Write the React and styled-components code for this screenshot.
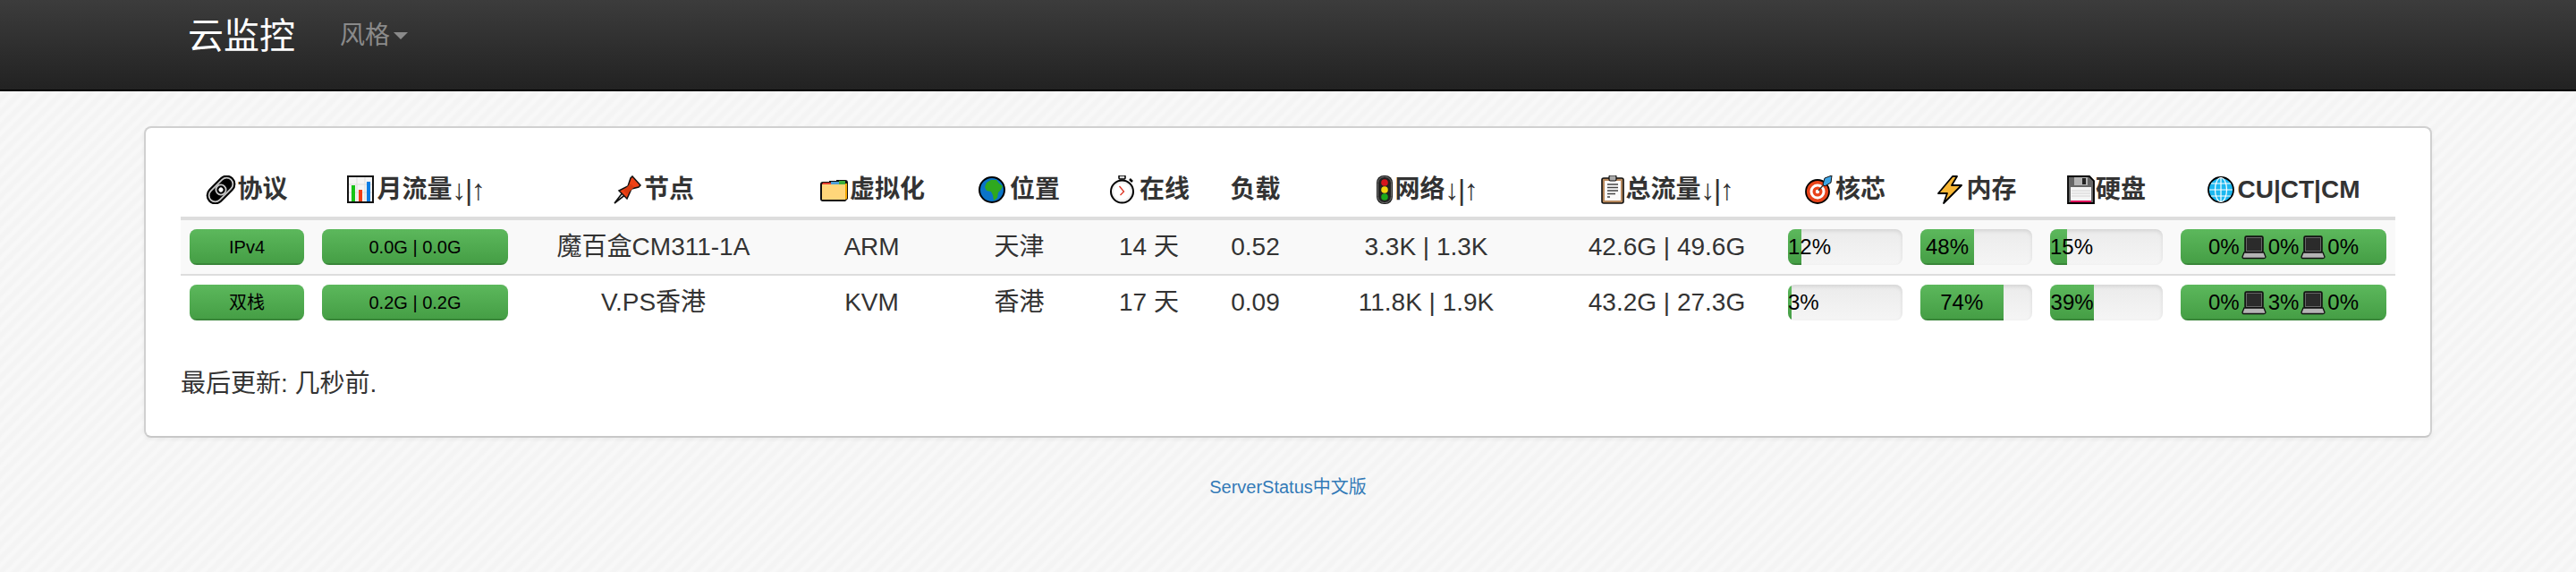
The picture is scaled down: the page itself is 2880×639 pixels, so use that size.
import React from "react";
import styled, { createGlobalStyle } from "styled-components";

const GlobalStyle = createGlobalStyle`
  html, body {
    margin: 0;
    padding: 0;
  }
  body {
    min-height: 639px;
    color: #333;
    font-family: "Liberation Sans", "Noto Sans CJK SC", sans-serif;
    font-size: 28px;
    line-height: 40px;
    background-color: #f6f6f6;
    background-image: repeating-linear-gradient(
      135deg,
      #f4f4f4 0,
      #f4f4f4 3px,
      #f8f8f8 6px,
      #f8f8f8 8px,
      #f4f4f4 11px
    );
  }
  * {
    box-sizing: border-box;
  }
`;

const NavBar = styled.nav`
  display: flex;
  height: 102px;
  padding: 20px 0 0 210px;
  background: linear-gradient(to bottom, #3c3c3c 0, #222 100%);
  border-bottom: 2px solid #000;
`;

const Brand = styled.a`
  width: 170px;
  color: #fff;
  font-size: 40px;
  line-height: 40px;
`;

const NavLink = styled.a`
  display: flex;
  align-items: center;
  height: 40px;
  color: #8a8a8a;
  font-size: 28px;
`;

const Caret = styled.span`
  width: 0;
  height: 0;
  margin-left: 4px;
  border-top: 8px solid #8a8a8a;
  border-left: 8px solid transparent;
  border-right: 8px solid transparent;
`;

const Card = styled.section`
  width: 2558px;
  margin: 39px auto 0;
  padding: 38px 39px;
  background: #fff;
  border: 2px solid #d0d0d0;
  border-bottom-color: #c8c8c8;
  border-radius: 8px;
  box-shadow: 0 2px 4px rgba(0, 0, 0, 0.05);
`;

const Table = styled.table`
  width: 2476px;
  margin-bottom: 41px;
  table-layout: fixed;
  border-collapse: separate;
  border-spacing: 0;
`;

const Th = styled.th`
  height: 65px;
  padding: 0;
  border-bottom: 4px solid #ddd;
  text-align: center;
  vertical-align: middle;
  white-space: nowrap;
  font-weight: 700;
  font-size: 28px;
`;

const HeadInner = styled.span`
  display: flex;
  align-items: center;
  justify-content: center;
`;

const Arrows = styled.span`
  font-weight: 400;
  font-size: 32px;
  letter-spacing: -1.5px;
`;

const Row = styled.tr`
  background: ${(p) => (p.$striped ? "#f9f9f9" : "transparent")};
`;

const Td = styled.td`
  height: ${(p) => (p.$divided ? 62 : 60)}px;
  padding: 0 10px;
  border-top: ${(p) => (p.$divided ? "2px solid #ddd" : "0")};
  text-align: center;
  vertical-align: middle;
  white-space: nowrap;
`;

const Progress = styled.div`
  height: 40px;
  border-radius: 8px;
  overflow: hidden;
  background: linear-gradient(to bottom, #ebebeb 0, #f5f5f5 100%);
  box-shadow: inset 0 2px 4px rgba(0, 0, 0, 0.1);
  color: #000;
  font-size: ${(p) => p.$size || 24}px;
  line-height: 40px;
`;

const Bar = styled.div`
  height: 100%;
  white-space: nowrap;
  text-align: center;
  background: linear-gradient(to bottom, #5cb85c 0, #449d44 100%);
  box-shadow: inset 0 -2px 0 rgba(0, 0, 0, 0.15);
`;

const PingInner = styled.div`
  display: flex;
  align-items: center;
  justify-content: center;
  height: 100%;
`;

const Note = styled.p`
  margin: 0;
  line-height: 40px;
`;

const Footer = styled.footer`
  margin-top: 35px;
  text-align: center;
  font-size: 20px;
  line-height: 40px;
  color: #337ab7;
`;

const Svg = styled.svg`
  display: block;
  flex: none;
  width: ${(p) => p.$w || 35}px;
  height: ${(p) => p.$h || 32}px;
`;

const LinkIcon = () => (
  <Svg viewBox="0 0 35 32">
    <g transform="rotate(-45 17 16)">
      <rect x="-2" y="6" width="38" height="20" rx="10" fill="#000" />
      <rect x="1" y="9" width="32" height="14" rx="7" fill="none" stroke="#c8c8c8" strokeWidth="1.8" />
      <circle cx="17" cy="16" r="5.6" fill="#000" stroke="#c8c8c8" strokeWidth="1.8" />
      <circle cx="17" cy="16" r="2.6" fill="#fff" />
    </g>
  </Svg>
);

const ChartIcon = () => (
  <Svg viewBox="0 0 35 32">
    <rect x="2" y="1" width="28" height="29" fill="#f4f4f4" stroke="#111" strokeWidth="2" />
    <path d="M3 10H29M3 19H29M12 2V29M21 2V29" stroke="#ddd" strokeWidth="1" />
    <rect x="6" y="11" width="4" height="18" fill="#16c316" />
    <rect x="14" y="16" width="4" height="13" fill="#f23c14" />
    <rect x="23" y="7" width="4" height="22" fill="#0a7de4" />
  </Svg>
);

const PinIcon = () => (
  <Svg viewBox="0 0 35 32">
    <path d="M2 31L12 18L15 21Z" fill="#eee" stroke="#111" strokeWidth="1.6" />
    <path d="M7 17L17 12L20 3L22 1L31 11L29 13L21 15L16 26Z" fill="#ee4115" stroke="#111" strokeWidth="1.5" />
    <path d="M12 17L20 9L24 13L16 21Z" fill="#d83a10" />
  </Svg>
);

const FolderIcon = () => (
  <Svg viewBox="0 0 35 32">
    <path d="M2 10Q2 7 5 7H12V6H20V5H30Q33 5 33 8V26L30 29H5Q2 29 2 26Z" fill="#111" />
    <path d="M5 8H14V10H4Z" fill="#e23b2c" />
    <path d="M14 7H23V10H14Z" fill="#4e9fd8" />
    <path d="M23 6H30V10H23Z" fill="#3fae3a" />
    <path d="M30 9H32V26L30 27Z" fill="#f5a800" />
    <rect x="4" y="10" width="26" height="17" fill="#ffd67a" />
  </Svg>
);

const EarthIcon = () => (
  <Svg viewBox="0 0 35 32">
    <circle cx="15" cy="16" r="14" fill="#0b74c8" stroke="#000" strokeWidth="2" />
    <path d="M9 8L14 5L20 5L23 9L27 12L25 16L22 19L21 25L17 28L16 22L14 18L9 17L7 13Z" fill="#2fa81e" />
  </Svg>
);

const WatchIcon = () => (
  <Svg viewBox="0 0 35 32">
    <rect x="12" y="0" width="7" height="4" rx="1" fill="#ddd" stroke="#000" strokeWidth="1.5" />
    <path d="M24 4L27 7" stroke="#000" strokeWidth="2.5" />
    <circle cx="15.5" cy="18" r="12.5" fill="#eee" stroke="#000" strokeWidth="2" />
    <circle cx="15.5" cy="18" r="9.5" fill="#fff" />
    <path d="M12.5 12L17.5 18L13.5 22" fill="none" stroke="#d32" strokeWidth="1.3" />
  </Svg>
);

const SignalIcon = () => (
  <Svg viewBox="0 0 22 32" $w={22}>
    <rect x="1" y="0" width="18" height="32" rx="8" fill="#222" />
    <rect x="2.5" y="1.5" width="15" height="29" rx="7" fill="none" stroke="#777" strokeWidth="1" />
    <circle cx="10" cy="8" r="3.8" fill="#d8141c" />
    <circle cx="10" cy="16" r="3.8" fill="#f2d50f" />
    <circle cx="10" cy="24" r="3.8" fill="#1ba81b" />
  </Svg>
);

const ClipboardIcon = () => (
  <Svg viewBox="0 0 28 32" $w={28}>
    <rect x="1" y="3" width="24" height="28" rx="2" fill="#b98a5e" stroke="#111" strokeWidth="1.6" />
    <rect x="4" y="6" width="18" height="22" fill="#fbfbfb" />
    <rect x="9" y="0" width="8" height="6" rx="1.5" fill="#aaa" stroke="#111" strokeWidth="1.2" />
    <path d="M7 10H19M7 13.5H19M7 17H19M7 20.5H16M7 24H10" stroke="#444" strokeWidth="1.3" />
  </Svg>
);

const DartIcon = () => (
  <Svg viewBox="0 0 34 32" $w={34}>
    <circle cx="14" cy="18" r="13" fill="#e8431a" stroke="#000" strokeWidth="1.8" />
    <circle cx="14" cy="18" r="8.5" fill="#fff" />
    <circle cx="14" cy="18" r="5.5" fill="#e8431a" />
    <circle cx="14" cy="18" r="2.2" fill="#fff" />
    <path d="M15 17L22 9" stroke="#333" strokeWidth="1.4" />
    <path d="M20 10L22 3L30 0L29 8L22 12Z" fill="#3ca6e8" stroke="#111" strokeWidth="1" />
  </Svg>
);

const BoltIcon = () => (
  <Svg viewBox="0 0 34 32" $w={34}>
    <path d="M19 1L3 20H13L9 31L29 11H18L24 1Z" fill="#f9b734" stroke="#000" strokeWidth="1.8" strokeLinejoin="round" />
  </Svg>
);

const FloppyIcon = () => (
  <Svg viewBox="0 0 32 32" $w={32}>
    <path d="M1 1H25L30 6V31H1Z" fill="#666" stroke="#000" strokeWidth="1.8" />
    <rect x="8" y="2" width="15" height="9" fill="#b4b4b4" />
    <rect x="17" y="3" width="4" height="7" fill="#222" />
    <rect x="4" y="13" width="23" height="17" fill="#f5f5f5" />
    <path d="M5 17H26M5 20H26M5 23H26" stroke="#d4d4d4" strokeWidth="1" />
    <rect x="4" y="28" width="23" height="2" fill="#e0105a" />
  </Svg>
);

const WebIcon = () => (
  <Svg viewBox="0 0 34 32" $w={34}>
    <circle cx="15" cy="16" r="14" fill="#1cb8f0" stroke="#000" strokeWidth="1.8" />
    <path d="M15 2.5V29.5M2 16H28M4 9H26M4 23H26" stroke="#fff" strokeWidth="1.2" />
    <ellipse cx="15" cy="16" rx="6.5" ry="13.5" fill="none" stroke="#fff" strokeWidth="1.2" />
  </Svg>
);

const LaptopIcon = () => (
  <Svg viewBox="-2 0 32 28" $w={32} $h={28}>
    <rect x="4" y="2" width="20" height="18" rx="1.5" fill="#222" stroke="#111" strokeWidth="1.5" />
    <rect x="5.5" y="3.5" width="17" height="15" fill="#2b2b2b" stroke="#666" strokeWidth="1" />
    <path d="M3 20H25L27 25Q27 26.5 25 26.5H3Q1 26.5 1 25Z" fill="#b4b4b4" stroke="#111" strokeWidth="1.3" />
  </Svg>
);

const columns = [148, 228, 305, 183, 147, 143, 95, 287, 251, 148, 145, 146, 250];

const heads = [
  { icon: <LinkIcon />, label: "协议" },
  { icon: <ChartIcon />, label: "月流量", arrows: true },
  { icon: <PinIcon />, label: "节点" },
  { icon: <FolderIcon />, label: "虚拟化" },
  { icon: <EarthIcon />, label: "位置" },
  { icon: <WatchIcon />, label: "在线" },
  { icon: null, label: "负载" },
  { icon: <SignalIcon />, label: "网络", arrows: true },
  { icon: <ClipboardIcon />, label: "总流量", arrows: true },
  { icon: <DartIcon />, label: "核芯" },
  { icon: <BoltIcon />, label: "内存" },
  { icon: <FloppyIcon />, label: "硬盘" },
  { icon: <WebIcon />, label: "CU|CT|CM" },
];

const servers = [
  {
    proto: "IPv4",
    month: "0.0G | 0.0G",
    name: "魔百盒CM311-1A",
    virt: "ARM",
    place: "天津",
    up: "14 天",
    load: "0.52",
    net: "3.3K | 1.3K",
    total: "42.6G | 49.6G",
    cpu: 12,
    mem: 48,
    disk: 15,
    ping: ["0%", "0%", "0%"],
  },
  {
    proto: "双栈",
    month: "0.2G | 0.2G",
    name: "V.PS香港",
    virt: "KVM",
    place: "香港",
    up: "17 天",
    load: "0.09",
    net: "11.8K | 1.9K",
    total: "43.2G | 27.3G",
    cpu: 3,
    mem: 74,
    disk: 39,
    ping: ["0%", "3%", "0%"],
  },
];

const Meter = ({ value }) => (
  <Progress>
    <Bar style={{ width: `${value}%` }}>{value}%</Bar>
  </Progress>
);

const Badge = ({ children, size }) => (
  <Progress $size={size}>
    <Bar>{children}</Bar>
  </Progress>
);

export default function App() {
  return (
    <>
      <GlobalStyle />
      <NavBar>
        <Brand>云监控</Brand>
        <NavLink>
          风格
          <Caret />
        </NavLink>
      </NavBar>
      <Card>
        <Table>
          <colgroup>
            {columns.map((w, i) => (
              <col key={i} width={w} />
            ))}
          </colgroup>
          <thead>
            <tr>
              {heads.map(({ icon, label, arrows }) => (
                <Th key={label}>
                  <HeadInner>
                    {icon}
                    {label}
                    {arrows && <Arrows>↓|↑</Arrows>}
                  </HeadInner>
                </Th>
              ))}
            </tr>
          </thead>
          <tbody>
            {servers.map((s, i) => (
              <Row key={s.name} $striped={i === 0}>
                <Td $divided={i > 0}>
                  <Badge size={20}>{s.proto}</Badge>
                </Td>
                <Td $divided={i > 0}>
                  <Badge size={20}>{s.month}</Badge>
                </Td>
                <Td $divided={i > 0}>{s.name}</Td>
                <Td $divided={i > 0}>{s.virt}</Td>
                <Td $divided={i > 0}>{s.place}</Td>
                <Td $divided={i > 0}>{s.up}</Td>
                <Td $divided={i > 0}>{s.load}</Td>
                <Td $divided={i > 0}>{s.net}</Td>
                <Td $divided={i > 0}>{s.total}</Td>
                <Td $divided={i > 0}>
                  <Meter value={s.cpu} />
                </Td>
                <Td $divided={i > 0}>
                  <Meter value={s.mem} />
                </Td>
                <Td $divided={i > 0}>
                  <Meter value={s.disk} />
                </Td>
                <Td $divided={i > 0}>
                  <Badge>
                    <PingInner>
                      {s.ping[0]}
                      <LaptopIcon />
                      {s.ping[1]}
                      <LaptopIcon />
                      {s.ping[2]}
                    </PingInner>
                  </Badge>
                </Td>
              </Row>
            ))}
          </tbody>
        </Table>
        <Note>最后更新: 几秒前.</Note>
      </Card>
      <Footer>ServerStatus中文版</Footer>
    </>
  );
}
